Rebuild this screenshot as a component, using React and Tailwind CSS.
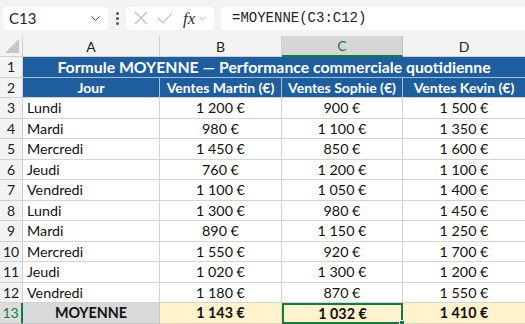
import { ChevronDown } from "lucide-react";

const COLS = "grid-cols-[23px_137px_122px_121px_122px]";

const ROWS = [
  ["Lundi", "1 200 €", "900 €", "1 500 €"],
  ["Mardi", "980 €", "1 100 €", "1 350 €"],
  ["Mercredi", "1 450 €", "850 €", "1 600 €"],
  ["Jeudi", "760 €", "1 200 €", "1 100 €"],
  ["Vendredi", "1 100 €", "1 050 €", "1 400 €"],
  ["Lundi", "1 300 €", "980 €", "1 450 €"],
  ["Mardi", "890 €", "1 150 €", "1 250 €"],
  ["Mercredi", "1 550 €", "920 €", "1 700 €"],
  ["Jeudi", "1 020 €", "1 300 €", "1 200 €"],
  ["Vendredi", "1 180 €", "870 €", "1 550 €"],
];

const font = { fontFamily: "Lato, 'Noto Sans', sans-serif" };

function FormulaBar() {
  return (
    <div className="h-[36px] bg-[#f3f3f3] flex items-center pl-[3px] gap-[7px]">
      <div className="h-[23px] w-[105px] bg-white rounded-[4px] flex items-center justify-between pl-[6px] pr-[5px]">
        <span className="text-[15px] text-[#222]" style={font}>C13</span>
        <ChevronDown size={15} strokeWidth={1.6} className="text-[#444]" />
      </div>
      <div className="flex flex-col gap-[2px] w-[4px] items-center">
        <span className="w-[3px] h-[3px] rounded-full bg-[#555]" />
        <span className="w-[3px] h-[3px] rounded-full bg-[#555]" />
        <span className="w-[3px] h-[3px] rounded-full bg-[#555]" />
      </div>
      <div className="h-[23px] w-[88px] bg-white rounded-[4px] flex items-center pl-[8px] gap-[9px]">
        <svg width="14" height="14" viewBox="0 0 14 14" className="text-[#bbb]">
          <path d="M1 1 L13 13 M13 1 L1 13" stroke="currentColor" strokeWidth="1.1" fill="none" />
        </svg>
        <svg width="16" height="14" viewBox="0 0 16 14" className="text-[#bbb]">
          <path d="M1 7 L6 12 L15 2" stroke="currentColor" strokeWidth="1.1" fill="none" />
        </svg>
        <span className="italic text-[17px] text-[#333] leading-none ml-[1px]" style={{ fontFamily: "'Liberation Serif', serif" }}>fx</span>
        <ChevronDown size={11} strokeWidth={1.4} className="text-[#999] -ml-[7px]" />
      </div>
      <div className="h-[23px] flex-1 bg-white rounded-l-[4px] flex items-center pl-[11px]">
        <span className="text-[14px] text-[#222]" style={{ fontFamily: "'Liberation Mono', monospace" }}>=MOYENNE(C3:C12)</span>
      </div>
    </div>
  );
}

function RowNum({ n, active }) {
  return (
    <div
      className={`border-r border-b flex items-center justify-center text-[14px] ${
        active
          ? "bg-[#dcdcdc] text-[#107c41] border-r-[#107c41] border-r-2 border-b-[#c8c8c8]"
          : "bg-[#f3f3f3] text-[#222] border-[#d0d0d0]"
      }`}
      style={font}
    >
      {n}
    </div>
  );
}

export default function App() {
  return (
    <div className="w-[525px] h-[324px] overflow-hidden bg-white" style={font}>
      <FormulaBar />
      <div className={`grid ${COLS} grid-rows-[21px_repeat(13,20.5px)]`}>
        {/* column headers */}
        <div className="bg-[#f3f3f3] border-r border-b border-[#d0d0d0] relative">
          <svg width="14" height="14" viewBox="0 0 14 14" className="absolute right-[3px] bottom-[3px]">
            <path d="M14 0 L14 14 L0 14 Z" fill="#c6c6c6" />
          </svg>
        </div>
        {["A", "B"].map((c) => (
          <div key={c} className="bg-[#f3f3f3] border-r border-b border-[#d0d0d0] flex items-center justify-center text-[14px] text-[#222]">
            {c}
          </div>
        ))}
        <div className="bg-[#d6d6d6] border-r border-[#c4c4c4] border-b-2 border-b-[#107c41] flex items-center justify-center text-[14px] text-[#107c41]">
          C
        </div>
        <div className="bg-[#f3f3f3] border-b border-[#d0d0d0] flex items-center justify-center text-[14px] text-[#222]">
          D
        </div>

        {/* row 1: title */}
        <RowNum n={1} />
        <div className="col-span-4 bg-[#1f5e9e] border-b border-[#a8bfd9] flex items-center justify-center text-white font-bold text-[15.8px] whitespace-nowrap">
          Formule MOYENNE — Performance commerciale quotidienne
        </div>

        {/* row 2: headers */}
        <RowNum n={2} />
        {["Jour", "Ventes Martin (€)", "Ventes Sophie (€)", "Ventes Kevin (€)"].map((h, i) => (
          <div
            key={h}
            className={`bg-[#1f5e9e] border-b border-[#d0d0d0] ${i < 3 ? "border-r border-r-[#a8bfd9]" : ""} flex items-center justify-center text-white font-bold text-[14px] whitespace-nowrap`}
          >
            {h}
          </div>
        ))}

        {/* data */}
        {ROWS.map((r, idx) => (
          <div key={idx} className="contents">
            <RowNum n={idx + 3} />
            <div className="border-r border-b border-[#d4d4d4] flex items-center pl-[4px] text-[14.3px] text-[#111]">
              {r[0]}
            </div>
            {r.slice(1).map((v, j) => (
              <div
                key={j}
                className={`${j < 2 ? "border-r" : ""} border-b border-[#d4d4d4] flex items-center justify-center text-[14.3px] text-[#111]`}
              >
                {v}
              </div>
            ))}
          </div>
        ))}

        {/* row 13: average */}
        <RowNum n={13} active />
        <div className="bg-[#d9d9d9] border-r border-b border-[#c8c8c8] flex items-center justify-center font-bold text-[14.3px] text-[#111]">
          MOYENNE
        </div>
        <div className="bg-[#fff2cc] border-r border-b border-[#e2d7b5] flex items-center justify-center font-bold text-[14.3px] text-[#111]">
          1 143 €
        </div>
        <div className="bg-[#fff2cc] border-2 border-[#107c41] flex items-center justify-center font-bold text-[14.3px] text-[#111] relative">
          1 032 €
          <span className="absolute -right-[4px] -bottom-[4px] w-[6px] h-[6px] bg-[#107c41] border border-white" />
        </div>
        <div className="bg-[#fff2cc] border-b border-[#e2d7b5] flex items-center justify-center font-bold text-[14.3px] text-[#111]">
          1 410 €
        </div>
      </div>
    </div>
  );
}
